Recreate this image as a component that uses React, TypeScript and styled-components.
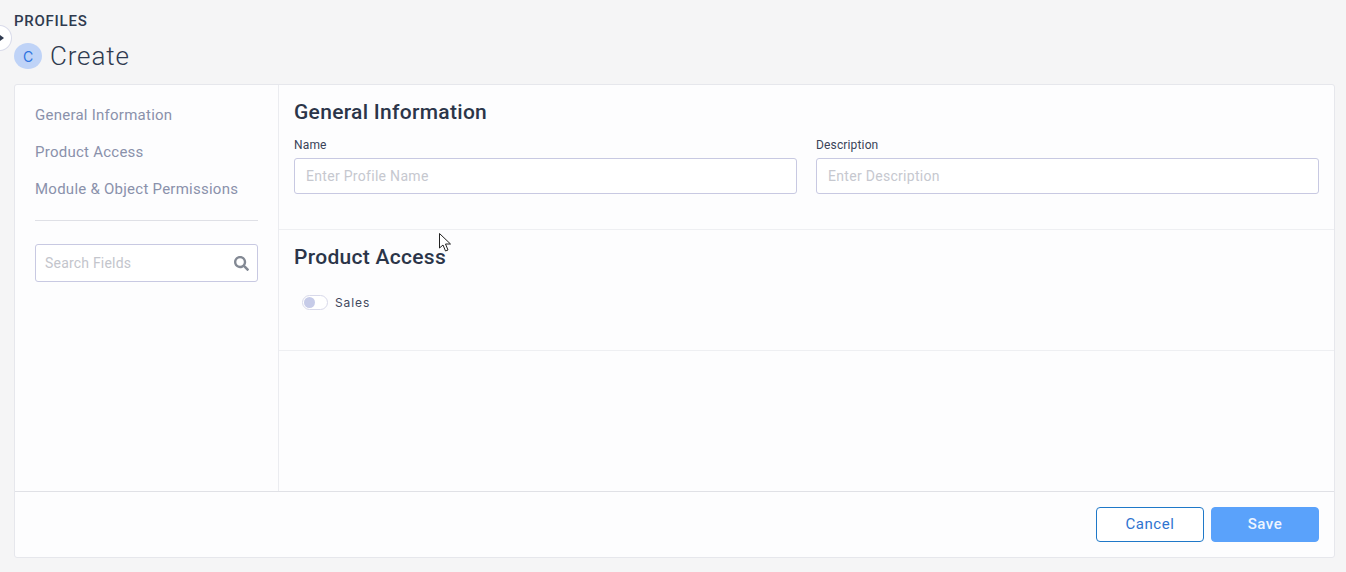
import React from "react";
import styled, { createGlobalStyle } from "styled-components";
import { FaSearch } from "react-icons/fa";

const GlobalStyle = createGlobalStyle`
  html, body {
    margin: 0;
    height: 100%;
    overflow: hidden;
    background: #f5f5f6;
    font-family: Inter, Roboto, "Liberation Sans", sans-serif;
  }
  * {
    box-sizing: border-box;
  }
`;

const Page = styled.div`
  position: relative;
  width: 1346px;
  height: 572px;
  padding: 13px 11px 14px 14px;
  display: flex;
  flex-direction: column;
`;

const Breadcrumb = styled.div`
  font-family: Roboto, sans-serif;
  font-size: 15px;
  line-height: 17px;
  font-weight: 500;
  letter-spacing: 0.75px;
  color: #2f3a4f;
`;

const TitleRow = styled.div`
  display: flex;
  align-items: center;
  gap: 8px;
  height: 30px;
  margin-top: 11px;
  margin-bottom: 13px;
`;

const Avatar = styled.div`
  width: 28px;
  height: 26px;
  border-radius: 50%;
  background: #bfd3f7;
  color: #2f74e0;
  font-size: 14px;
  display: flex;
  align-items: center;
  justify-content: center;
`;

const Title = styled.h1`
  margin: 0;
  font-family: Roboto, sans-serif;
  font-size: 26px;
  font-weight: 300;
  letter-spacing: 0.85px;
  color: #2f3a4f;
`;

const CollapseButton = styled.div`
  position: absolute;
  left: -13px;
  top: 25px;
  width: 25px;
  height: 26px;
  border-radius: 50%;
  background: #fff;
  border: 1px solid #d9dbea;
  display: flex;
  align-items: center;
  justify-content: flex-end;
  padding-right: 7px;
`;

const Arrow = styled.span`
  width: 0;
  height: 0;
  border-left: 4px solid #2f3a4f;
  border-top: 3.5px solid transparent;
  border-bottom: 3.5px solid transparent;
`;

const Card = styled.div`
  flex: 1;
  min-height: 0;
  display: flex;
  flex-direction: column;
  background: #fdfdfe;
  border: 1px solid #e6e7ec;
  border-radius: 3px;
`;

const CardBody = styled.div`
  flex: 1;
  min-height: 0;
  display: flex;
`;

const Sidebar = styled.aside`
  width: 264px;
  flex: none;
  padding: 19px 20px 0 20px;
  border-right: 1px solid #ebecf0;
`;

const NavList = styled.nav`
  display: flex;
  flex-direction: column;
  gap: 15px;
  padding-bottom: 20px;
  border-bottom: 1px solid #dfe0e6;
`;

const NavItem = styled.a`
  font-family: Roboto, sans-serif;
  font-size: 15px;
  line-height: 22px;
  letter-spacing: 0.25px;
  color: #8a91ab;
`;

const SearchBox = styled.div`
  margin-top: 23px;
  height: 38px;
  display: flex;
  align-items: center;
  justify-content: space-between;
  padding: 0 8px 0 9px;
  border: 1px solid #c8c9e2;
  border-radius: 3px;
  background: #fff;
  color: #838994;
`;

const SearchText = styled.span`
  font-family: Roboto, sans-serif;
  font-size: 14px;
  letter-spacing: 0.2px;
  color: #c3c5cc;
`;

const Content = styled.main`
  flex: 1;
  min-width: 0;
`;

const Section = styled.section<{ $height: number }>`
  height: ${(p) => p.$height}px;
  padding: 0 15px;
  border-bottom: 1px solid #eeeff2;
`;

const SectionTitle = styled.h2<{ $top: number }>`
  margin: 0;
  padding-top: ${(p) => p.$top}px;
  font-size: 21px;
  line-height: 28px;
  font-weight: 500;
  color: #2b3549;
  font-family: Roboto, sans-serif;
  letter-spacing: 0.3px;
`;

const FieldRow = styled.div`
  display: flex;
  gap: 19px;
  margin-top: 11px;
`;

const Field = styled.label`
  flex: 1;
  display: flex;
  flex-direction: column;
  gap: 5px;
`;

const FieldLabel = styled.span`
  font-family: Roboto, sans-serif;
  font-size: 12px;
  line-height: 16px;
  letter-spacing: 0.15px;
  color: #3a4358;
`;

const FieldInput = styled.div`
  height: 36px;
  padding: 0 12px 0 11px;
  display: flex;
  align-items: center;
  border: 1px solid #c8c9e2;
  border-radius: 3px;
  background: #fff;
  font-family: Roboto, sans-serif;
  font-size: 14px;
  letter-spacing: 0.3px;
  color: #c6c8cf;
`;

const ToggleRow = styled.div`
  display: flex;
  align-items: center;
  gap: 7px;
  margin-top: 24px;
  padding-left: 8px;
`;

const Toggle = styled.div`
  width: 26px;
  height: 15px;
  padding: 1px;
  border: 1px solid #d8d9ea;
  border-radius: 8px;
  background: #fff;
`;

const Knob = styled.div`
  width: 11px;
  height: 11px;
  border-radius: 50%;
  background: #c6cbe8;
`;

const ToggleLabel = styled.span`
  font-size: 12px;
  letter-spacing: 0.9px;
  color: #3f485c;
`;

const Footer = styled.footer`
  height: 66px;
  flex: none;
  display: flex;
  justify-content: flex-end;
  align-items: flex-start;
  gap: 7px;
  padding: 15px 15px 0 0;
  border-top: 1px solid #e0e1e6;
`;

const Button = styled.button<{ $primary?: boolean }>`
  width: 108px;
  height: 35px;
  padding: 0 0 2px;
  border-radius: 4px;
  font-family: Roboto, sans-serif;
  font-size: 15px;
  letter-spacing: 0.55px;
  font-weight: ${(p) => (p.$primary ? 500 : 400)};
  color: ${(p) => (p.$primary ? "#eef5ff" : "#2f74d0")};
  background: ${(p) => (p.$primary ? "#5aa2fb" : "#fff")};
  border: 1px solid ${(p) => (p.$primary ? "#5aa2fb" : "#1f78c8")};
`;

const Cursor = styled.svg`
  position: absolute;
  left: 439px;
  top: 233px;
`;

export default function App() {
  return (
    <Page>
      <GlobalStyle />
      <CollapseButton>
        <Arrow />
      </CollapseButton>
      <Breadcrumb>PROFILES</Breadcrumb>
      <TitleRow>
        <Avatar>C</Avatar>
        <Title>Create</Title>
      </TitleRow>
      <Card>
        <CardBody>
          <Sidebar>
            <NavList>
              <NavItem>General Information</NavItem>
              <NavItem>Product Access</NavItem>
              <NavItem>Module &amp; Object Permissions</NavItem>
            </NavList>
            <SearchBox>
              <SearchText>Search Fields</SearchText>
              <FaSearch size={15} />
            </SearchBox>
          </Sidebar>
          <Content>
            <Section $height={145}>
              <SectionTitle $top={13}>General Information</SectionTitle>
              <FieldRow>
                <Field>
                  <FieldLabel>Name</FieldLabel>
                  <FieldInput>Enter Profile Name</FieldInput>
                </Field>
                <Field>
                  <FieldLabel>Description</FieldLabel>
                  <FieldInput>Enter Description</FieldInput>
                </Field>
              </FieldRow>
            </Section>
            <Section $height={121}>
              <SectionTitle $top={13}>Product Access</SectionTitle>
              <ToggleRow>
                <Toggle>
                  <Knob />
                </Toggle>
                <ToggleLabel>Sales</ToggleLabel>
              </ToggleRow>
            </Section>
          </Content>
        </CardBody>
        <Footer>
          <Button>Cancel</Button>
          <Button $primary>Save</Button>
        </Footer>
      </Card>
      <Cursor width="13" height="20" viewBox="0 0 13 20">
        <path
          d="M0.5 0.5 L0.5 15 L4 12 L6.5 18 L9 17 L6.5 11 L11.5 11 Z"
          fill="#fff"
          stroke="#222"
          strokeWidth="1"
        />
      </Cursor>
    </Page>
  );
}
